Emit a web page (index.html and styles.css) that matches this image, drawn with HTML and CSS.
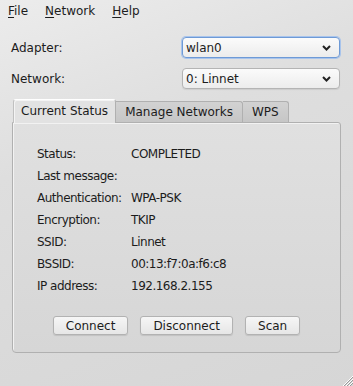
FILE: index.html
```html
<!DOCTYPE html>
<html lang="en">
<head>
    <meta charset="UTF-8">
    <title>wpa_gui</title>
    <link rel="stylesheet" href="styles.css">
</head>
<body>
    <div class="window">
        <div class="menubar">
            <span class="menu-item"><u>F</u>ile</span>
            <span class="menu-item"><u>N</u>etwork</span>
            <span class="menu-item"><u>H</u>elp</span>
        </div>

        <div class="form">
            <label class="form-label">Adapter:</label>
            <div class="combo focused">
                <span>wlan0</span>
                <svg class="chevron" width="9" height="6" viewBox="0 0 9 6"><path d="M1 1 L4.5 4.5 L8 1" fill="none" stroke="#222" stroke-width="2"/></svg>
            </div>
            <label class="form-label">Network:</label>
            <div class="combo">
                <span>0: Linnet</span>
                <svg class="chevron" width="9" height="6" viewBox="0 0 9 6"><path d="M1 1 L4.5 4.5 L8 1" fill="none" stroke="#222" stroke-width="2"/></svg>
            </div>
        </div>

        <div class="tabs">
            <div class="tab active">Current Status</div>
            <div class="tab">Manage Networks</div>
            <div class="tab">WPS</div>
        </div>
        <div class="pane">
            <div class="status">
                <span>Status:</span><span>COMPLETED</span>
                <span>Last message:</span><span></span>
                <span>Authentication:</span><span>WPA-PSK</span>
                <span>Encryption:</span><span>TKIP</span>
                <span>SSID:</span><span>Linnet</span>
                <span>BSSID:</span><span>00:13:f7:0a:f6:c8</span>
                <span>IP address:</span><span>192.168.2.155</span>
            </div>
            <div class="buttons">
                <button class="btn">Connect</button>
                <button class="btn">Disconnect</button>
                <button class="btn">Scan</button>
            </div>
        </div>

        <svg class="grip" width="12" height="12" viewBox="0 0 12 12">
            <path d="M12 2 L2 12 M12 5 L5 12 M12 8 L8 12" stroke="#fff" stroke-width="1"/>
            <path d="M12 3 L3 12 M12 6 L6 12 M12 9 L9 12" stroke="#999" stroke-width="1"/>
        </svg>
    </div>
</body>
</html>
```

FILE: styles.css
```css
body {
    margin: 0;
    font-family: "DejaVu Sans", sans-serif;
    font-size: 12px;
    color: #1c1c1c;
}
.window {
    position: relative;
    width: 353px;
    height: 386px;
    overflow: hidden;
    background: linear-gradient(160deg, #ececec 0%, #dedede 35%, #d6d6d6 100%);
}
.menubar {
    display: flex;
    height: 22px;
    align-items: center;
    padding-left: 8px;
}
.menu-item {
    margin-right: 17px;
}
.menu-item u {
    text-decoration-thickness: 1px;
    text-underline-offset: 2px;
}
.form {
    display: grid;
    grid-template-columns: 1fr 158px;
    row-gap: 10px;
    align-items: center;
    padding: 15px 13px 0 11px;
}
.combo {
    height: 19px;
    border: 1px solid #b4b4b4;
    border-radius: 4px;
    background: linear-gradient(#fbfbfb, #ececec);
    display: flex;
    align-items: center;
    justify-content: space-between;
    padding: 0 8px 0 3px;
    box-shadow: 0 1px 1px rgba(0, 0, 0, 0.08);
}
.combo.focused {
    border-color: #6e9ad6;
    box-shadow: 0 0 0 1px #a8c4ec;
}
.tabs {
    display: flex;
    align-items: flex-end;
    margin: 10px 0 0 13px;
    height: 23px;
}
.tab {
    height: 20px;
    line-height: 20px;
    padding: 0 9px;
    border: 1px solid #b0b0b0;
    border-bottom: none;
    border-left: none;
    border-radius: 0 3px 0 0;
    background: linear-gradient(#d2d2d2, #c6c6c6);
}
.tab.active {
    position: relative;
    z-index: 1;
    height: 23px;
    line-height: 23px;
    padding: 0 7px;
    margin-bottom: -1px;
    border-left: 1px solid #c0c0c0;
    border-top-color: #fff;
    border-radius: 3px 3px 0 0;
    background: #e2e2e2;
    box-shadow: inset 1px 1px 0 #f4f4f4;
}
.pane {
    margin: 0 12px;
    border: 1px solid #b0b0b0;
    border-radius: 0 3px 4px 4px;
    background: linear-gradient(#e0e0e0, #d6d6d6);
    box-shadow: inset 1px 1px 0 #f2f2f2;
    padding: 20px 12px 17px 24px;
}
.status {
    display: grid;
    grid-template-columns: 94px 1fr;
    grid-auto-rows: 22px;
    align-items: center;
    letter-spacing: -0.5px;
}
.buttons {
    display: flex;
    justify-content: center;
    gap: 12px;
    margin-top: 19px;
    margin-left: -12px;
}
.btn {
    font: inherit;
    color: #1c1c1c;
    height: 19px;
    padding: 0 12px;
    border: 1px solid #b2b2b2;
    border-radius: 3px;
    background: linear-gradient(#f6f6f6, #e6e6e6);
    box-shadow: 0 1px 1px rgba(0, 0, 0, 0.1);
}
.grip {
    position: absolute;
    right: 0;
    bottom: 0;
}
```
